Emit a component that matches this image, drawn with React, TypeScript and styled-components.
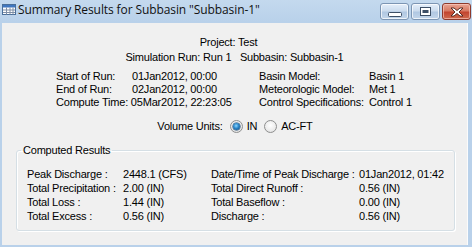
import React from "react";
import styled, { createGlobalStyle } from "styled-components";

const Global = createGlobalStyle`
  html, body { margin: 0; padding: 0; }
  body { width: 472px; height: 247px; overflow: hidden; background: #b9d1ea; }
`;

const Window = styled.div`
  width: 472px;
  height: 247px;
  display: flex;
  flex-direction: column;
  background: linear-gradient(#c4d9ee 0px, #b9d1ea 22px, #b9d1ea 100%);
  font-family: "Liberation Sans", Arial, sans-serif;
  font-size: 11px;
  color: #000;
`;

const TitleBar = styled.div`
  height: 23px;
  display: flex;
  align-items: flex-start;
  padding-left: 2px;
`;

const TitleIcon = styled.svg`
  margin-top: 4px;
  flex: none;
`;

const TitleText = styled.div`
  font-family: "Open Sans", "Noto Sans", sans-serif;
  font-size: 12px;
  line-height: 16px;
  margin-top: 2px;
  margin-left: 2px;
  letter-spacing: -0.1px;
  color: #111;
  flex: 1;
  white-space: nowrap;
`;

const Controls = styled.div`
  display: flex;
  gap: 2px;
  margin-top: 3px;
  margin-right: 1px;
`;

const CtlButton = styled.div<{ $close?: boolean }>`
  width: 27px;
  height: 15px;
  border: 1px solid ${(p) => (p.$close ? "#8d3a2c" : "#7c95b3")};
  border-radius: 3px;
  box-shadow: inset 0 0 0 1px ${(p) => (p.$close ? "rgba(255,210,200,0.6)" : "rgba(255,255,255,0.7)")};
  background: ${(p) =>
    p.$close
      ? "linear-gradient(#e8a493 0%, #d77a63 45%, #c2452f 55%, #cf6a4e 100%)"
      : "linear-gradient(#e4eefa 0%, #ccdcee 45%, #b1c8e2 55%, #c3d6eb 100%)"};
  display: flex;
  align-items: center;
  justify-content: center;
`;

const Body = styled.div`
  height: 222px;
  margin: 0 4px 2px 2px;
  background: #f0f0f0;
  border-right: 1px solid #fbfbfb;
  box-sizing: border-box;
  display: flex;
  flex-direction: column;
  padding-top: 13px;
  line-height: 13px;
  letter-spacing: -0.2px;
`;

const HeaderLine = styled.div<{ $shift?: number }>`
  text-align: center;
  height: 15px;
  padding-right: ${(p) => p.$shift ?? 0}px;
  white-space: pre;
`;

const InfoGrid = styled.div`
  display: grid;
  grid-template-columns: 76px 127px 110px auto;
  margin-top: 4px;
  margin-left: 54px;
  row-gap: 0;
  white-space: nowrap;
`;

const Span2 = styled.div`
  grid-column: span 2;
`;

const UnitsRow = styled.div`
  display: flex;
  align-items: center;
  justify-content: center;
  margin-top: 9px;
  height: 16px;
  padding-left: 1px;
`;

const Radio = styled.span<{ $on?: boolean }>`
  width: 11px;
  height: 11px;
  border-radius: 50%;
  border: 1px solid #8e8f8f;
  background: radial-gradient(circle at 50% 40%, #ffffff 0%, #ececec 60%, #d6d6d6 100%);
  display: inline-flex;
  align-items: center;
  justify-content: center;
  margin: 0 4px 0 0;
  &::after {
    content: "";
    display: ${(p) => (p.$on ? "block" : "none")};
    width: 7px;
    height: 7px;
    border-radius: 50%;
    background: radial-gradient(circle at 45% 40%, #8fd8ff 0%, #2a85c8 45%, #0b3f70 100%);
    box-shadow: 0 0 0 0.5px #123f66;
  }
`;

const RadioGroup = styled.span`
  display: inline-flex;
  align-items: center;
  margin-left: 7px;
`;

const Group = styled.fieldset`
  margin: 10px 0 0 14px;
  width: 439px;
  box-sizing: border-box;
  padding: 0 0 0 10px;
  height: 87px;
  border: 1px solid #d5dfe5;
  border-radius: 3px;
  box-shadow: 1px 1px 0 #ffffff, inset 1px 1px 0 #ffffff;
  min-width: 0;
`;

const Legend = styled.legend`
  padding: 0 2px;
  margin-left: -6px;
  line-height: 13px;
`;

const ResultGrid = styled.div`
  display: grid;
  grid-template-columns: 96px 88px 148px auto;
  grid-auto-rows: 14px;
  margin-top: 11px;
  white-space: nowrap;
`;

const MinGlyph = () => (
  <svg width="14" height="6" viewBox="0 0 14 6" style={{ marginTop: 6 }}>
    <rect x="0.5" y="0.5" width="13" height="4" rx="1" fill="#fff" stroke="#3d4f66" />
  </svg>
);

const MaxGlyph = () => (
  <svg width="11" height="9" viewBox="0 0 11 9">
    <rect x="0.5" y="0.5" width="10" height="8" fill="#fff" stroke="#3d4f66" />
    <rect x="2.5" y="3" width="6" height="3" fill="#3d4f66" />
  </svg>
);

const CloseGlyph = () => (
  <svg width="14" height="10" viewBox="0 0 14 10">
    <path
      d="M1 1 L4 1 L7 3.5 L10 1 L13 1 L9 5 L13 9 L10 9 L7 6.5 L4 9 L1 9 L5 5 Z"
      fill="#fff"
      stroke="#4a2018"
      strokeWidth="0.9"
      strokeLinejoin="round"
    />
  </svg>
);

export default function App() {
  return (
    <>
      <Global />
      <Window>
        <TitleBar>
          <TitleIcon width="14" height="11" viewBox="0 0 14 11">
            <rect x="0.5" y="0.5" width="13" height="10" fill="#fff" stroke="#4a6f9a" />
            <rect x="1" y="1" width="12" height="2.5" fill="#3f77c0" />
            <path d="M1 6 H13 M1 8.5 H13 M4.5 3.5 V10.5 M8 3.5 V10.5 M11 3.5 V10.5" stroke="#7f8fa6" strokeWidth="1" />
          </TitleIcon>
          <TitleText>Summary Results for Subbasin "Subbasin-1"</TitleText>
          <Controls>
            <CtlButton><MinGlyph /></CtlButton>
            <CtlButton><MaxGlyph /></CtlButton>
            <CtlButton $close><CloseGlyph /></CtlButton>
          </Controls>
        </TitleBar>
        <Body>
          <HeaderLine $shift={12}>Project: Test</HeaderLine>
          <HeaderLine>{"Simulation Run: Run 1   Subbasin: Subbasin-1"}</HeaderLine>
          <InfoGrid>
            <div>Start of Run:</div>
            <div>01Jan2012, 00:00</div>
            <div>Basin Model:</div>
            <div>Basin 1</div>
            <div>End of Run:</div>
            <div>02Jan2012, 00:00</div>
            <div>Meteorologic Model:</div>
            <div>Met 1</div>
            <Span2>Compute Time: 05Mar2012, 22:23:05</Span2>
            <div>Control Specifications:</div>
            <div>Control 1</div>
          </InfoGrid>
          <UnitsRow>
            <span>Volume Units:</span>
            <RadioGroup><Radio $on />IN</RadioGroup>
            <RadioGroup><Radio />AC-FT</RadioGroup>
          </UnitsRow>
          <Group>
            <Legend>Computed Results</Legend>
            <ResultGrid>
              <div>Peak Discharge :</div>
              <div>2448.1 (CFS)</div>
              <div>Date/Time of Peak Discharge :</div>
              <div>01Jan2012, 01:42</div>
              <div>Total Precipitation :</div>
              <div>2.00 (IN)</div>
              <div>Total Direct Runoff :</div>
              <div>0.56 (IN)</div>
              <div>Total Loss :</div>
              <div>1.44 (IN)</div>
              <div>Total Baseflow :</div>
              <div>0.00 (IN)</div>
              <div>Total Excess :</div>
              <div>0.56 (IN)</div>
              <div>Discharge :</div>
              <div>0.56 (IN)</div>
            </ResultGrid>
          </Group>
        </Body>
      </Window>
    </>
  );
}
